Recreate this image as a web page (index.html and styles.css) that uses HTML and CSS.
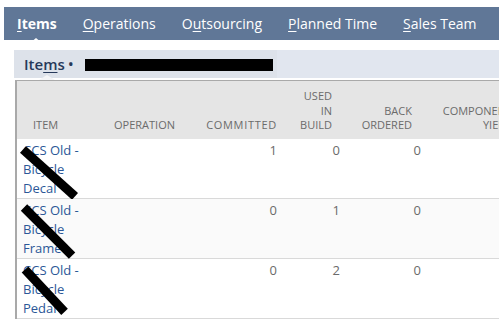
FILE: index.html
```html
<!DOCTYPE html>
<html lang="en">
<head>
  <meta charset="UTF-8" />
  <meta name="viewport" content="width=device-width, initial-scale=1" />
  <title>Work Order Items</title>
  <link rel="stylesheet" href="styles.css">
</head>
<body>
  <nav class="tabs">
    <a class="tab active" href="#"><u>I</u>tems</a>
    <a class="tab" href="#"><u>O</u>perations</a>
    <a class="tab" href="#">O<u>u</u>tsourcing</a>
    <a class="tab" href="#"><u>P</u>lanned Time</a>
    <a class="tab" href="#"><u>S</u>ales Team</a>
  </nav>

  <section class="panel">
    <div class="panel-head">
      <div class="panel-title">
        <span class="title-text">Ite<u>m</u>s</span>
        <span class="title-dot">&bull;</span>
        <span class="redacted"></span>
      </div>
      <div class="panel-rest"></div>
    </div>

    <div class="grid-wrap">
      <table class="grid">
        <colgroup>
          <col class="c-item">
          <col class="c-op">
          <col class="c-comm">
          <col class="c-used">
          <col class="c-back">
          <col class="c-yield">
        </colgroup>
        <thead>
          <tr>
            <th class="h-item">Item</th>
            <th class="h-op">Operation</th>
            <th class="num h-comm">Committed</th>
            <th class="num h-used">Used<br>in<br>build</th>
            <th class="num h-back">Back<br>ordered</th>
            <th class="num h-yield">Component<br>yield</th>
          </tr>
        </thead>
        <tbody>
          <tr>
            <td class="item"><a href="#">CCS Old - Bicycle Decal</a><span class="strike s1"></span></td>
            <td></td>
            <td class="num">1</td>
            <td class="num">0</td>
            <td class="num">0</td>
            <td></td>
          </tr>
          <tr class="alt">
            <td class="item"><a href="#">CCS Old - Bicycle Frame</a><span class="strike s2"></span></td>
            <td></td>
            <td class="num">0</td>
            <td class="num">1</td>
            <td class="num">0</td>
            <td></td>
          </tr>
          <tr>
            <td class="item"><a href="#">CCS Old - Bicycle Pedal</a><span class="strike s3"></span></td>
            <td></td>
            <td class="num">0</td>
            <td class="num">2</td>
            <td class="num">0</td>
            <td></td>
          </tr>
        </tbody>
      </table>
    </div>
  </section>
</body>
</html>
```

FILE: styles.css
```css
body, html {
  margin: 0;
  padding: 0;
  background: #fff;
  overflow: hidden;
}
body {
  font-family: "Open Sans", "Liberation Sans", sans-serif;
}

/* --- Top tabs --- */
.tabs {
  margin: 7px 0 0 4px;
  height: 33px;
  background: #607797;
  display: flex;
  align-items: center;
  gap: 26px;
  padding-left: 13px;
}
.tab {
  position: relative;
  color: #fff;
  text-decoration: none;
  font-size: 14px;
  line-height: 19px;
  white-space: nowrap;
}
.tab u {
  text-underline-offset: 2px;
}
.tab.active {
  font-weight: 700;
}
.tab.active::after {
  content: "";
  position: absolute;
  left: 13px;
  bottom: -10px;
  border: 6px solid transparent;
  border-top: 0;
  border-bottom: 5px solid #fff;
}

/* --- Panel --- */
.panel {
  margin: 10px 0 0 14px;
}
.panel-head {
  display: flex;
  height: 28px;
}
.panel-title {
  position: relative;
  width: 263px;
  background: #dde2ea;
  display: flex;
  align-items: center;
  padding-left: 10px;
  box-sizing: border-box;
  color: #26395a;
}
.panel-title::after {
  content: "";
  position: absolute;
  left: 25px;
  bottom: -2px;
  border: 8px solid transparent;
  border-top: 0;
  border-bottom: 5px solid #f4f5f7;
}
.panel-rest {
  flex: 1;
  background: #e1e6ef;
}
.title-text {
  font-size: 15px;
  font-weight: 600;
}
.title-text u {
  text-underline-offset: 2px;
}
.title-dot {
  font-size: 16px;
  margin-left: 3px;
}
.redacted {
  display: inline-block;
  width: 188px;
  height: 12px;
  background: #000;
  margin-left: 11px;
  margin-top: 2px;
}

/* --- Grid --- */
.grid-wrap {
  margin: 2px 0 0 1px;
}
.grid {
  table-layout: fixed;
  border-collapse: collapse;
  width: 520px;
  border-top: 1px solid #a9a9a9;
  border-left: 2px solid #a9a9a9;
}
.c-item { width: 84px; }
.c-op { width: 90px; }
.c-comm { width: 95px; }
.c-used { width: 63px; }
.c-back { width: 81px; }
.c-yield { width: 107px; }

.grid th {
  background: #e5e5e5;
  color: #6b6b6b;
  font-size: 11px;
  font-weight: 400;
  line-height: 14.5px;
  text-transform: uppercase;
  text-align: left;
  vertical-align: bottom;
  padding: 8px 8px 6px 14px;
  height: 57px;
  box-sizing: border-box;
}
.grid th.h-item { padding-left: 16px; }
.grid th.num { text-align: right; padding-left: 0; }
.grid th.h-comm { padding-right: 8px; letter-spacing: 0.7px; }
.grid th.h-used { padding-right: 16px; }
.grid th.h-back { padding-right: 17px; }
.grid th.h-yield { padding-right: 24px; }

.grid td {
  font-size: 13px;
  line-height: 19px;
  color: #6b6b6b;
  vertical-align: top;
  padding: 2px 8px 0 14px;
  height: 60px;
  box-sizing: border-box;
  border-bottom: 1px solid #d9d9d9;
}
.grid td.num {
  text-align: right;
  padding-left: 0;
}
.grid tr.alt td {
  background: #fafafa;
}
.grid td.item {
  position: relative;
  padding-left: 6px;
  padding-right: 8px;
}
.item a {
  color: #2b5797;
  text-decoration: none;
}

/* black redaction marks over item names */
.strike {
  position: absolute;
  height: 9px;
  background: #000;
  transform-origin: 0 50%;
}
.s1 { left: 6px; top: 6px; width: 70px; transform: rotate(42deg); }
.s2 { left: 7px; top: 4px; width: 68px; transform: rotate(45deg); }
.s3 { left: 8px; top: 6px; width: 58px; transform: rotate(47deg); }
```
